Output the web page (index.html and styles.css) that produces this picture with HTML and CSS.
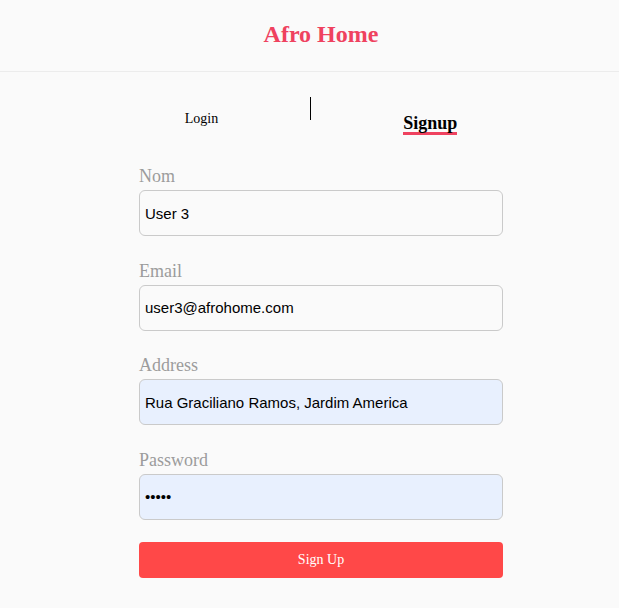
FILE: index.html
```html
<!DOCTYPE html>
<html lang="fr">
<head>
<meta charset="utf-8">
<title>Afro Home</title>
<link rel="stylesheet" href="styles.css">
</head>
<body>
<header class="site-header">
  <h1 class="brand">Afro Home</h1>
</header>
<main class="page">
  <nav class="tabs">
    <span class="tab tab-login">Login</span>
    <span class="tab-divider"></span>
    <span class="tab tab-signup">Signup</span>
  </nav>
  <form class="form">
    <div class="field">
      <label class="label">Nom</label>
      <input class="input" type="text" value="User 3">
    </div>
    <div class="field">
      <label class="label">Email</label>
      <input class="input" type="text" value="user3@afrohome.com">
    </div>
    <div class="field">
      <label class="label">Address</label>
      <input class="input input-filled" type="text" value="Rua Graciliano Ramos, Jardim America">
    </div>
    <div class="field">
      <label class="label">Password</label>
      <input class="input input-filled" type="password" value="12345">
    </div>
    <button class="submit" type="button">Sign Up</button>
  </form>
</main>
</body>
</html>
```

FILE: styles.css
```css
html, body {
  margin: 0;
  padding: 0;
  background: #fafafa;
}
body {
  font-family: "Liberation Serif", "Times New Roman", serif;
  color: #000;
}
.site-header {
  height: 71px;
  border-bottom: 1px solid #ececec;
  padding-left: 23px;
  display: flex;
  justify-content: center;
  box-sizing: content-box;
}
.brand {
  margin: 0;
  padding-top: 20px;
  font-size: 24px;
  line-height: 28px;
  font-weight: bold;
  color: #ef425f;
}
.page {
  padding-left: 23px;
  display: flex;
  flex-direction: column;
  align-items: center;
}
.tabs {
  display: flex;
  align-items: flex-start;
  margin-top: 25px;
  gap: 92px;
}
.tab-divider {
  width: 1px;
  height: 23px;
  background: #000;
}
.tab-login {
  font-size: 14px;
  line-height: 16px;
  margin-top: 14px;
}
.tab-signup {
  font-size: 18px;
  line-height: 18px;
  font-weight: bold;
  margin-top: 17px;
  border-bottom: 3px solid #ef425f;
}
.form {
  width: 364px;
  margin-top: 31px;
  display: flex;
  flex-direction: column;
  gap: 24.67px;
}
.field {
  display: flex;
  flex-direction: column;
}
.label {
  font-size: 18px;
  line-height: 21px;
  color: #9c9c9c;
  margin-bottom: 3px;
}
.input {
  box-sizing: border-box;
  height: 46px;
  width: 100%;
  margin: 0;
  border: 1px solid #cacaca;
  border-radius: 6px;
  padding: 0 5px;
  font-family: "Liberation Sans", Arial, sans-serif;
  font-size: 15px;
  color: #000;
  background: #fafafa;
  outline: none;
}
.input-filled {
  background: #e8f0fe;
}
.submit {
  margin-top: -2.67px;
  height: 36px;
  border: none;
  border-radius: 4px;
  background: #ff4848;
  color: #fff;
  font-family: "Liberation Serif", "Times New Roman", serif;
  font-size: 14px;
  padding: 0;
}
```
